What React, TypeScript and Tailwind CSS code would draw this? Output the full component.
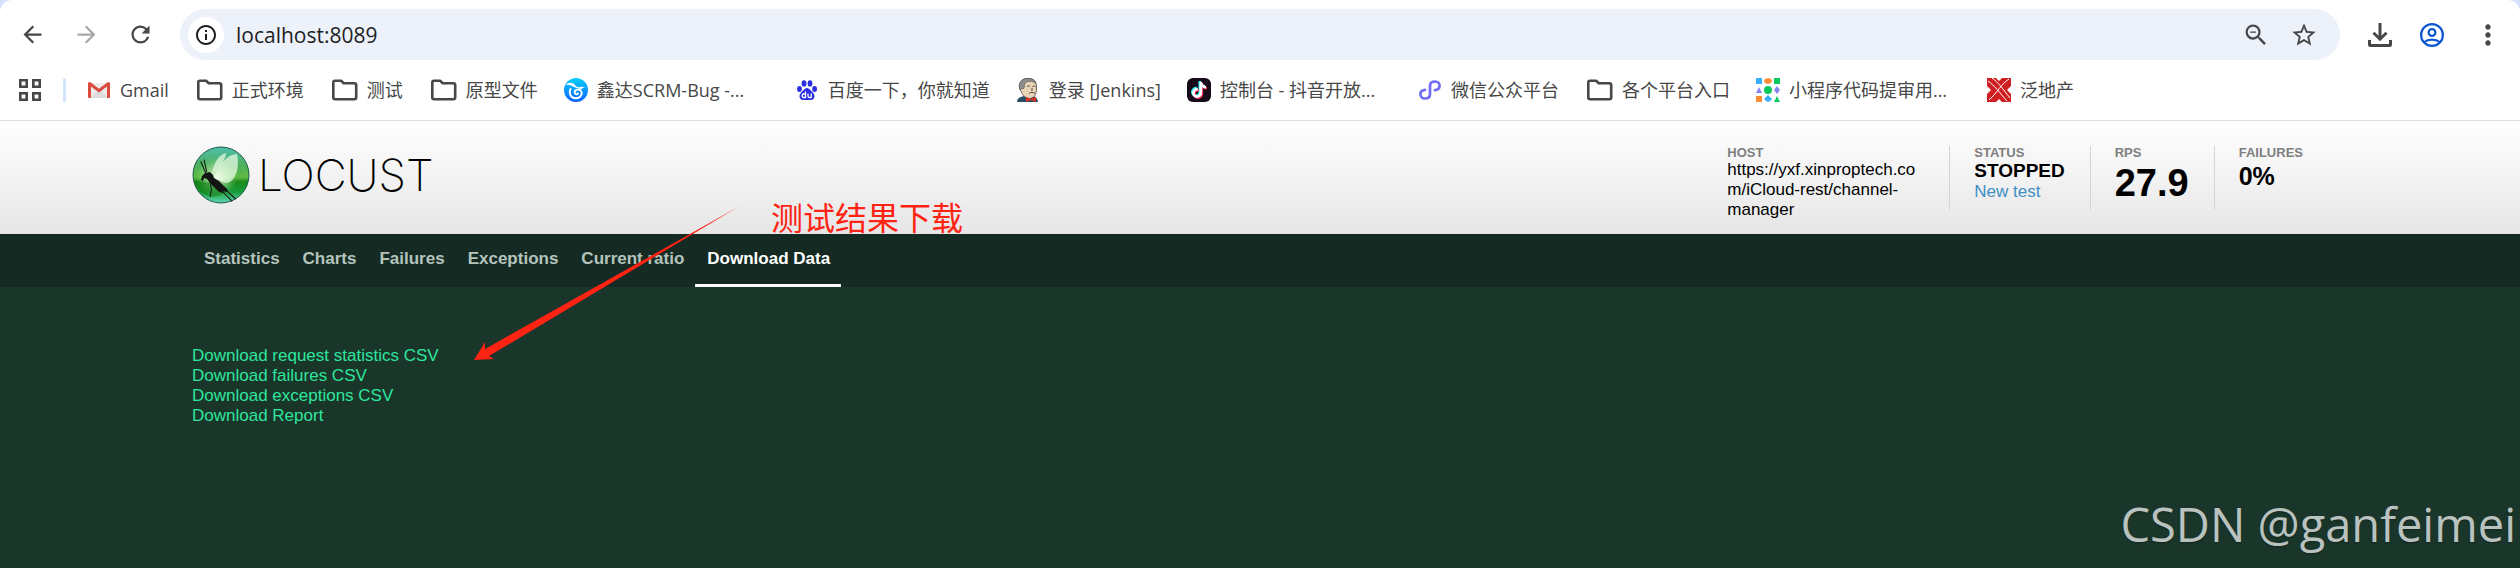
import type { ReactNode } from "react";
import { MdArrowBack, MdArrowForward, MdInfoOutline, MdMoreVert, MdRefresh, MdStarOutline, MdZoomOut } from "react-icons/md";
import { FaTiktok } from "react-icons/fa6";

interface Bookmark {
  title: string;
  icon: ReactNode;
  truncated?: boolean;
}

interface StatProps {
  label: string;
  children: ReactNode;
  first?: boolean;
}

function FolderIcon() {
  return (
    <svg viewBox="-2 0 28 24" className="h-6 w-7" fill="none" stroke="#474747" strokeWidth="2.600" strokeLinejoin="round">
      <path d="M1.300 4.600c0-1.200.6-1.800 1.600-1.800h6.200l2.600 2.400h10.700c1.200 0 1.800.6 1.800 1.700v12.600c0 1.100-.6 1.700-1.800 1.700H3.100c-1.200 0-1.800-.6-1.800-1.700z" />
    </svg>
  );
}

function GmailIcon() {
  return (
    <svg viewBox="0 0 24 24" className="size-6">
      <path d="M3 5h18v15H3z" fill="#eceaea" />
      <path d="M3 20l9-9 9 9z" fill="#dedcdc" />
      <path d="M1 5.500V19a1 1 0 0 0 1 1h2V8.500l8 6 8-6V20h2a1 1 0 0 0 1-1V5.500A1.500 1.500 0 0 0 20.600 4.300L12 10.800 3.400 4.300A1.500 1.500 0 0 0 1 5.500z" fill="#dd4b3e" />
    </svg>
  );
}

function WaveIcon() {
  return (
    <svg viewBox="0 0 24 24" className="size-6">
      <defs>
        <linearGradient id="wave" x1="0" y1="0" x2="0" y2="1">
          <stop offset="0" stopColor="#08d0f8" />
          <stop offset="1" stopColor="#0a62ff" />
        </linearGradient>
      </defs>
      <circle cx="12" cy="12" r="12" fill="url(#wave)" />
      <path d="M1 7c3-3 8-3 10 0 1.500 2 3 2.500 5 2 2-.6 4-.3 5.500 1-2-.4-3.500 0-4 1.500-2.500-1.500-5-1-7.500-2.500C7.500 7.500 5 6 1 7z" fill="#fff" />
      <path d="M6.500 11c-2 4 0 9 5 9.300 5 .3 7.500-4.500 5.500-7.300-2-2.600-6.500-1.500-6.300 1.500.1 2 2.800 2.500 3.300.8" fill="none" stroke="#fff" strokeWidth="1.900" strokeLinecap="round" />
    </svg>
  );
}

function BaiduIcon() {
  return (
    <svg viewBox="0 0 24 24" className="size-6" fill="#2a2ee0">
      <ellipse cx="4.500" cy="11" rx="2.400" ry="3" />
      <ellipse cx="9" cy="5.400" rx="2.400" ry="3.200" />
      <ellipse cx="15" cy="5.400" rx="2.400" ry="3.200" />
      <ellipse cx="19.600" cy="11" rx="2.400" ry="3" />
      <path d="M12 10c2.500 0 3.500 2.500 5.500 4.300 3.500 3 2 7.700-1.500 7.700H8c-3.500 0-5-4.700-1.500-7.700C8.500 12.500 9.500 10 12 10z" />
      <path d="M10.500 13.500v6H8.800a1.500 1.500 0 0 1 0-3.500h1.700M13 15.500v2.500c0 1 .5 1.500 1.300 1.500h1.900v-4" fill="none" stroke="#fff" strokeWidth="1.300" />
    </svg>
  );
}

function JenkinsIcon() {
  return (
    <svg viewBox="0 0 24 24" className="size-6">
      <path d="M1 24c0-3 2-5 7-6h9c3 1 5 3 5 6z" fill="#2b4d63" />
      <path d="M4 11C2 4 7 0 12.500.5 19 .5 21 5 20.500 11c0 6-3 9.500-7 9.500S6 17 5 13z" fill="#e8d3b5" stroke="#4f4a45" strokeWidth=".8" />
      <path d="M4 12C1 4 7 0 12 .5c4-.3 7 1.500 8 5C16 2 10 3 8.500 6c-.5 2 .5 4-1.500 5l-1-1z" fill="#8f8e8c" stroke="#4f4a45" strokeWidth=".6" />
      <path d="M11 8.500c1-.8 2-.8 3 0M16.500 8.500c1-.6 2-.6 3 0M13 15.500c2-1.500 4-1.500 6 0M16 10v3" fill="none" stroke="#4f4a45" />
      <path d="M10 19l5 2 5-2v5l-5-2-5 2z" fill="#dc3226" />
    </svg>
  );
}

function DouyinIcon() {
  return (
    <span className="relative flex size-6 items-center justify-center rounded-md bg-[#170b1a]">
      <FaTiktok className="absolute top-[3px] left-[3px] size-4 text-[#25f4ee]" />
      <FaTiktok className="absolute top-[5px] left-[5px] size-4 text-[#fe2c55]" />
      <FaTiktok className="absolute top-1 left-1 size-4 text-white" />
    </span>
  );
}

function MiniProgramIcon() {
  return (
    <svg viewBox="0 0 24 24" className="size-6" fill="none" stroke="#6f6df2" strokeWidth="2.700" strokeLinecap="round">
      <path d="M7 11.800c-3 .4-4.600 2.400-4.600 4.400C2.400 18.600 4.300 20.500 7 20.500c3 0 5-1.800 5-4.600V8.100c0-2.800 2-4.600 5-4.600 2.700 0 4.600 1.900 4.600 4.300 0 2-1.600 4-4.600 4.400" />
    </svg>
  );
}

function ShapesIcon() {
  return (
    <svg viewBox="0 0 24 24" className="size-6">
      <path d="M0 0h6v6H0z" fill="#37aefe" />
      <path d="M12 0l3 1 1 2-1 2-3 1-3-1-1-2 1-2zM0 18h6v6H0z" fill="#ff8b33" />
      <path d="M18 0h6v6h-6zM21 18l3 6h-6z" fill="#07c95f" />
      <circle cx="12" cy="12" r="4" fill="#07c95f" />
      <path d="M3 9l3 6H0zM21 8l3 4-3 4-3-4z" fill="#8583f5" />
      <path d="M12 17l2 2 2 2-2 2-2 1-2-1-2-2 2-2z" fill="#37aefe" />
    </svg>
  );
}

function CrossIcon() {
  return (
    <svg viewBox="0 0 24 24" className="size-6">
      <path d="M0 0h9l3 3 3-3h9v8l-4 4 4 4v8h-9l-3-3-3 3H0v-8l4-4-4-4z" fill="#d01f22" />
      <path d="M1 3C8 8 12 14 20 23M5 0c6 4 10 10 18 20M22 1C14 6 11 14 2 22" fill="none" stroke="#fff" strokeWidth="1" />
    </svg>
  );
}

function DownloadIcon() {
  return (
    <svg viewBox="0 0 24 24" className="size-6" fill="none" stroke="#474747" strokeWidth="3">
      <path d="M12 0v16M5.500 9.800l6.500 6.400 6.500-6.400M1.500 17v4.500a1 1 0 0 0 1 1h19a1 1 0 0 0 1-1V17" />
    </svg>
  );
}

function ProfileIcon() {
  return (
    <svg viewBox="0 0 24 24" className="size-6" fill="none" stroke="#0b57d0" strokeWidth="2.200">
      <circle cx="12" cy="12" r="10.900" />
      <circle cx="12" cy="9.500" r="3.400" />
      <path d="M4 19.300c4.500-3.600 11.500-3.600 16 0" />
    </svg>
  );
}

function LocustMark() {
  return (
    <svg viewBox="0 0 58 58" className="size-[58px]">
      <defs>
        <linearGradient id="globe" x1="0" y1="0" x2="0" y2="1">
          <stop offset="0" stopColor="#4fc0ae" />
          <stop offset=".3" stopColor="#4bb060" />
          <stop offset=".54" stopColor="#5fb944" />
          <stop offset=".62" stopColor="#1b8a1c" />
          <stop offset=".8" stopColor="#179a3c" />
          <stop offset="1" stopColor="#5fd9b4" />
        </linearGradient>
        <radialGradient id="glow" cx=".42" cy=".55" r=".38">
          <stop offset="0" stopColor="#fff" />
          <stop offset=".4" stopColor="#d9f8cf" stopOpacity=".55" />
          <stop offset="1" stopColor="#9be58b" stopOpacity="0" />
        </radialGradient>
      </defs>
      <circle cx="29" cy="29" r="28" fill="url(#globe)" stroke="#1f5a45" />
      <circle cx="29" cy="29" r="27" fill="url(#glow)" />
      <path d="M2 34c8 3 16 3 22 1l12 10C24 55 7 52 2 34z" fill="#0b780c" opacity=".5" />
      <path d="M20 28C22 15 28 8 34 7c1 3-5 14-14 21zM22 30C27 17 37 8 45 8c3 13-1 27-10 29-4 0-8-3-13-7z" fill="#eafbe6" opacity=".72" />
      <path d="M10 30l3-3 5-1 3 3 1 3 5 3 9 9-1 2-4-1 1 2-5-1-9-9-3-4-3-1-1 3-2-1z" fill="#121512" />
      <path d="M13.700 27L8.700 15.300M14.700 26L12 13.700M18 35l1.500 8.700L18 51M28.700 43.700l11.600 11.600M35 45l8.700 8" fill="none" stroke="#182018" strokeWidth="1.100" />
    </svg>
  );
}

const bookmarks: Bookmark[] = [
  { title: "Gmail", icon: <GmailIcon /> },
  { title: "正式环境", icon: <FolderIcon /> },
  { title: "测试", icon: <FolderIcon /> },
  { title: "原型文件", icon: <FolderIcon /> },
  { title: "鑫达SCRM-Bug -...", icon: <WaveIcon />, truncated: true },
  { title: "百度一下，你就知道", icon: <BaiduIcon /> },
  { title: "登录 [Jenkins]", icon: <JenkinsIcon /> },
  { title: "控制台 - 抖音开放...", icon: <DouyinIcon />, truncated: true },
  { title: "微信公众平台", icon: <MiniProgramIcon /> },
  { title: "各个平台入口", icon: <FolderIcon /> },
  { title: "小程序代码提审用...", icon: <ShapesIcon />, truncated: true },
  { title: "泛地产", icon: <CrossIcon /> },
];

const tabs = ["Statistics", "Charts", "Failures", "Exceptions", "Current ratio", "Download Data"];

const downloads = [
  "Download request statistics CSV",
  "Download failures CSV",
  "Download exceptions CSV",
  "Download Report",
];

function BrowserBar() {
  return (
    <div className="bg-[#d3e3fd]">
      <div className="rounded-t-xl border-b border-[#dfdfdf] bg-white font-['Open_Sans','Noto_Sans_CJK_SC',sans-serif] text-[#474747]">
        <div className="flex items-center pt-[9px] pr-4">
          <div className="flex w-[180px] items-center gap-[27px] pl-[19px]">
            <button aria-label="Back"><MdArrowBack className="size-[27px]" /></button>
            <button aria-label="Forward" disabled><MdArrowForward className="size-[27px] text-[#a9a9a9]" /></button>
            <button aria-label="Reload"><MdRefresh className="size-[27px]" /></button>
          </div>
          <div className="flex h-[51px] grow items-center rounded-full bg-[#ecf1fa] pr-[22px] pl-2">
            <button aria-label="Site information" className="flex size-9 items-center justify-center rounded-full bg-white text-[#1f1f1f]">
              <MdInfoOutline className="size-6" />
            </button>
            <input aria-label="Address" defaultValue="localhost:8089" className="ml-3 min-w-0 grow bg-transparent text-[21px] text-[#1f1f1f] outline-none" />
            <div className="flex items-center gap-5">
              <button aria-label="Zoom"><MdZoomOut className="size-7" /></button>
              <button aria-label="Bookmark this tab"><MdStarOutline className="size-7" /></button>
            </div>
          </div>
          <div className="ml-7 flex items-center gap-7">
            <button aria-label="Downloads"><DownloadIcon /></button>
            <button aria-label="Profile"><ProfileIcon /></button>
            <button aria-label="Menu"><MdMoreVert className="size-8" /></button>
          </div>
        </div>
        <nav aria-label="Bookmarks" className="flex h-[60px] items-center pl-[19px] text-lg whitespace-nowrap">
          <button aria-label="Apps">
            <svg viewBox="0 0 22 22" className="size-[22px]" fill="none" stroke="#474747" strokeWidth="2.600">
              <path d="M1.300 1.300h6.400v6.400H1.300zM14.300 1.300h6.400v6.400h-6.400zM1.300 14.300h6.400v6.400H1.300zM14.300 14.300h6.400v6.400h-6.400z" />
            </svg>
          </button>
          <span className="mr-[21px] ml-[22px] h-6 w-[3px] rounded-full bg-[#d3e3fd]" />
          <div className="flex items-center gap-[26px]">
            {bookmarks.map((bookmark) => (
              <a key={bookmark.title} href="#" className="flex items-center gap-[9px]">
                {bookmark.icon}
                <span className={bookmark.truncated ? "w-[172px]" : ""}>{bookmark.title}</span>
              </a>
            ))}
          </div>
        </nav>
      </div>
    </div>
  );
}

function Stat({ label, children, first }: StatProps) {
  return (
    <div className={first ? "h-16 pr-6" : "h-16 border-l border-[#d4d4d4] pr-[25px] pl-6"}>
      <div className="text-[13px] leading-[14px] font-bold text-[#7f7f7f]">{label}</div>
      {children}
    </div>
  );
}

export default function App() {
  return (
    <div className="relative flex min-h-screen flex-col overflow-hidden bg-[#1a352a] font-['Liberation_Sans',Arial,sans-serif] text-[17px] leading-5">
      <BrowserBar />

      <header className="flex items-start justify-between bg-linear-to-b from-white to-[#e6e6e6] px-48 pt-[25px] pb-6">
        <a href="#" className="flex items-center gap-2 text-black">
          <LocustMark />
          <span className="font-['Inter',sans-serif] text-[44px] leading-[58px] font-extralight">LOCUST</span>
        </a>
        <div className="flex text-black">
          <Stat label="HOST" first>
            <div className="w-[198px] wrap-break-word">https://yxf.xinproptech.com/iCloud-rest/channel-manager</div>
          </Stat>
          <Stat label="STATUS">
            <div className="text-[19px] leading-[22px] font-bold">STOPPED</div>
            <a href="#" className="block text-[#3d8fc5]">New test</a>
          </Stat>
          <Stat label="RPS">
            <div className="text-[38px] leading-[46px] font-bold">27.9</div>
          </Stat>
          <Stat label="FAILURES">
            <div className="text-[25px] leading-8 font-bold">0%</div>
          </Stat>
        </div>
      </header>

      <nav aria-label="Sections" className="flex bg-[#142a22] px-48 font-bold">
        {tabs.map((tab) => (
          <a
            key={tab}
            href="#"
            className={
              tab === "Download Data"
                ? "border-b-3 border-white py-[15px] pr-[11px] pl-3 text-white"
                : "border-b-3 border-transparent py-[15px] pr-[11px] pl-3 text-[#b4c4bd]"
            }
          >
            {tab}
          </a>
        ))}
      </nav>

      <main className="flex flex-col items-start px-48 pt-[59px] text-[#2ee59d]">
        {downloads.map((item) => (
          <a key={item} href="#">{item}</a>
        ))}
      </main>

      {/* Annotation */}
      <svg viewBox="0 0 264 153" className="pointer-events-none absolute top-[207px] left-[474px] h-[153px] w-[264px]" fill="#ff2314">
        <path d="M264 0L15 149l5 3-20 1 11-18v7z" />
      </svg>
      <p className="absolute top-[198px] left-[771px] font-['Noto_Sans_CJK_SC',sans-serif] text-[32px] leading-9 text-[#ff2314]">测试结果下载</p>

      <p className="absolute right-1 bottom-3 font-['Open_Sans',sans-serif] text-[47px] leading-[64px] text-[#bac2bf] text-shadow-sm">CSDN @ganfeimei</p>
    </div>
  );
}
